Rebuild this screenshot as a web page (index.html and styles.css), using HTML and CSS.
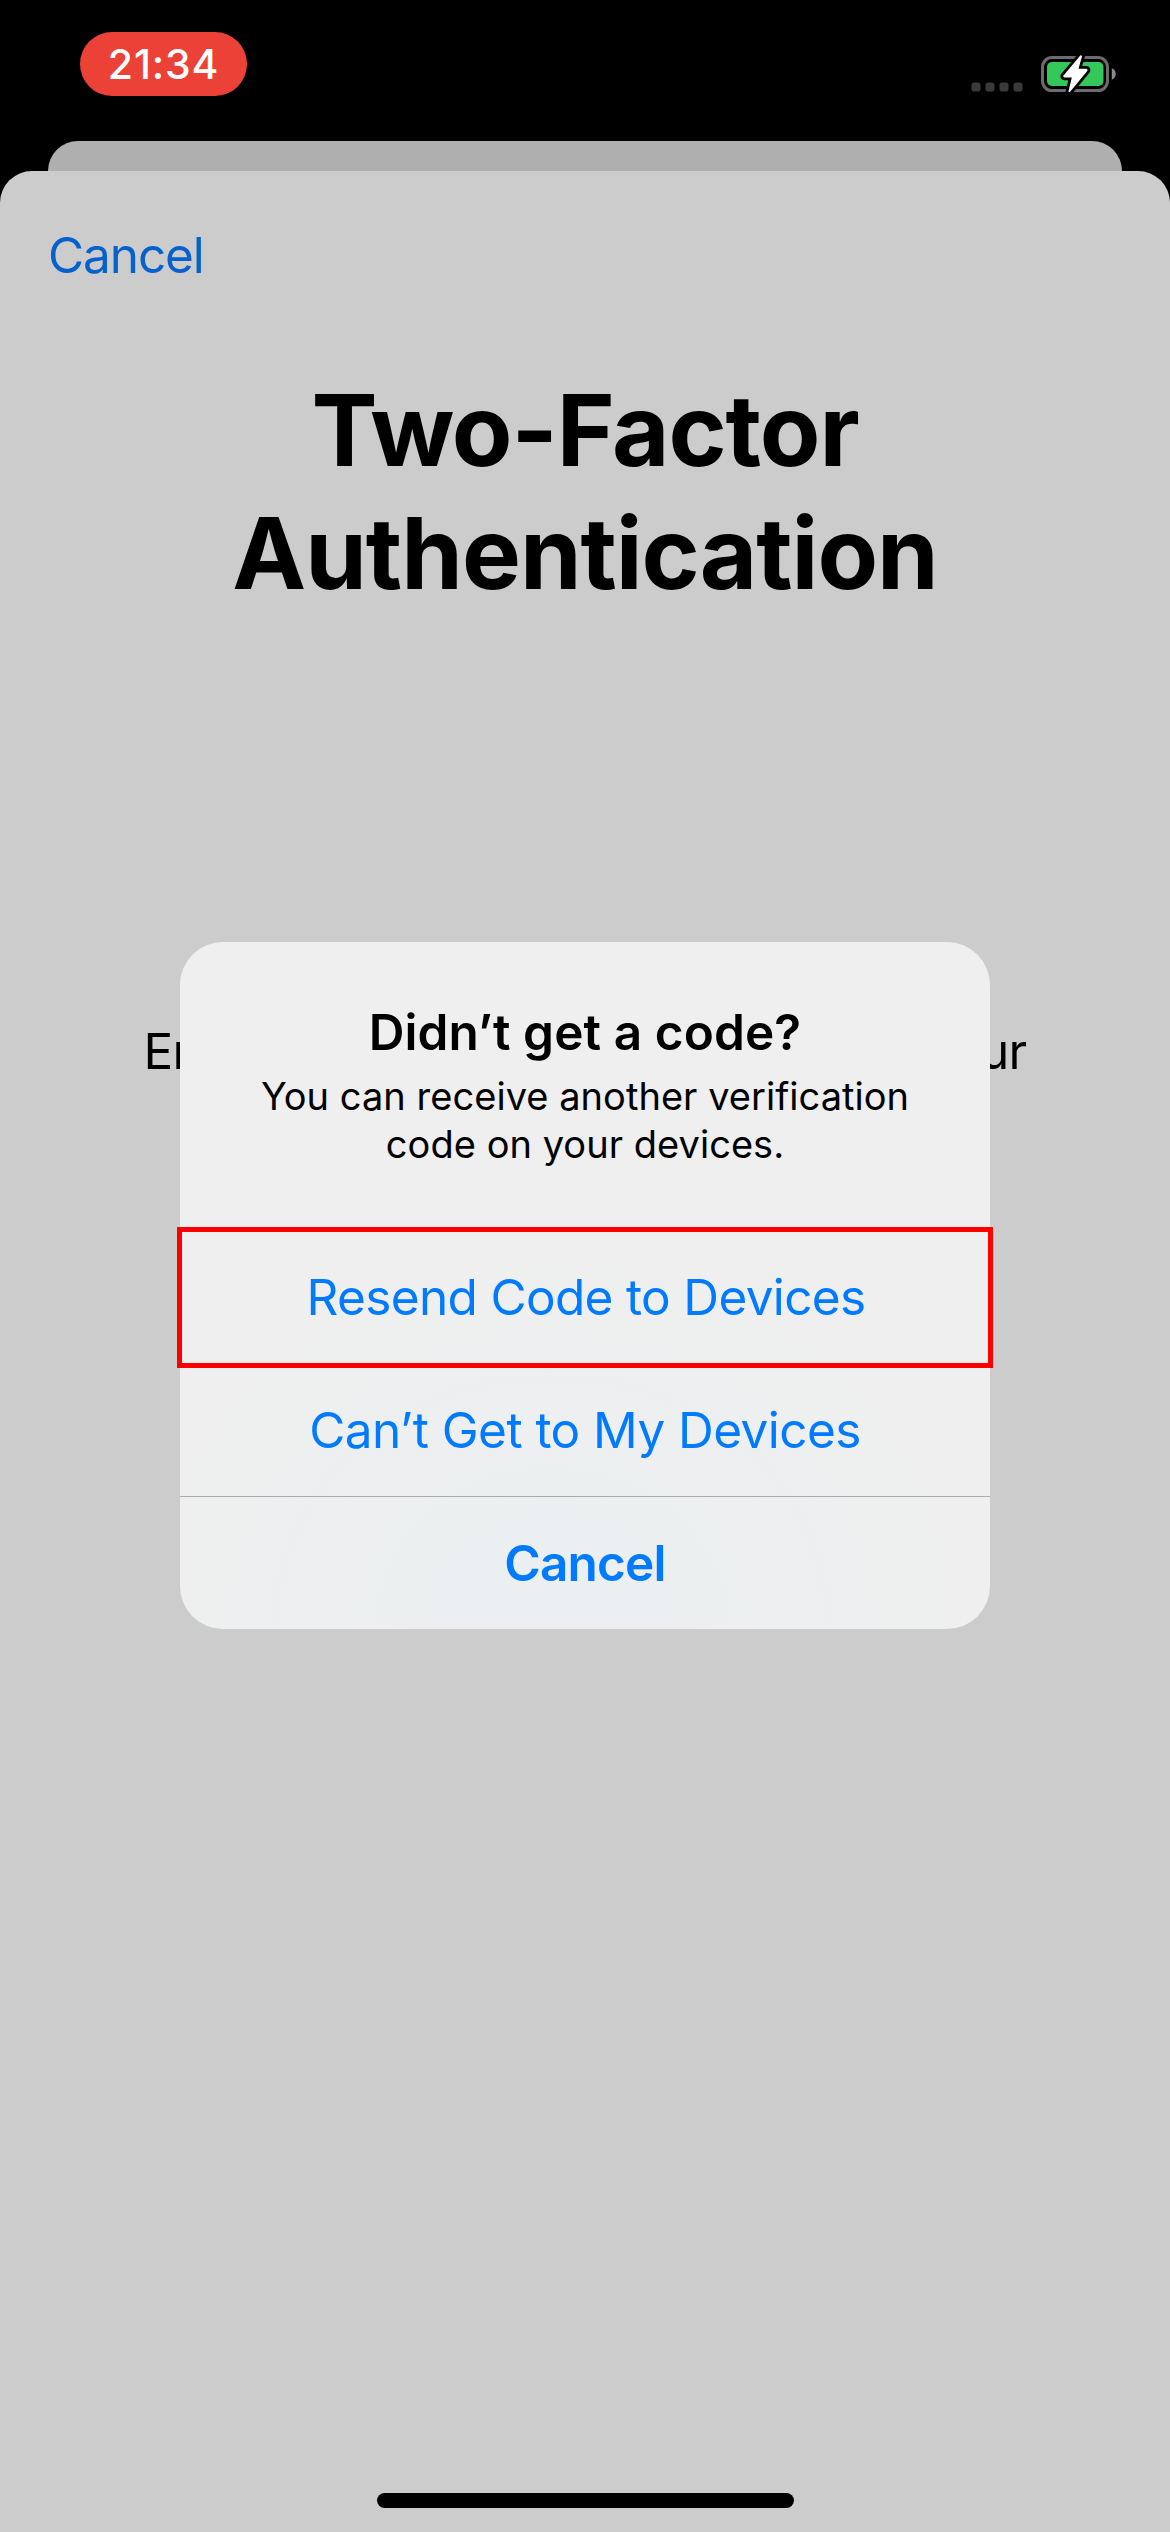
FILE: index.html
```html
<!DOCTYPE html>
<html lang="en">
<head>
<meta charset="utf-8">
<title>Two-Factor Authentication</title>
<link rel="stylesheet" href="styles.css">
</head>
<body>
<div class="screen">
  <header class="status-bar">
    <span class="clock">21:34</span>
    <div class="indicators">
      <svg class="signal" width="52" height="10" viewBox="0 0 52 10" aria-hidden="true">
        <g fill="#3a3a3c">
          <rect x="0.5" y="0.5" width="9" height="9" rx="2.8"/>
          <rect x="14.5" y="0.5" width="9" height="9" rx="2.8"/>
          <rect x="28.5" y="0.5" width="9" height="9" rx="2.8"/>
          <rect x="42.5" y="0.5" width="9" height="9" rx="2.8"/>
        </g>
      </svg>
      <svg class="battery" width="76" height="42" viewBox="0 0 76 42" aria-hidden="true">
        <rect x="2.500" y="4.600" width="65" height="33" rx="9.500" fill="none" stroke="#6c6c70" stroke-width="3"/>
        <rect x="7" y="9" width="56.500" height="24" rx="5" fill="#34c759"/>
        <path d="M71.800 15.300c2.600 1 4 3.300 4 5.700s-1.400 4.700-4 5.700z" fill="#8a8a8d"/>
        <path d="M40.300 2.500 23.500 22.500q-1 1.700 1 2h7.300L28.500 38.300q.5 1.500 1.600.5L47.300 18q.9-1.800-1-2.200h-7.800L42 3.500q-.6-1.700-1.700-1z" fill="#fff" stroke="#000" stroke-width="5.600" stroke-linejoin="round" paint-order="stroke"/>
      </svg>
    </div>
  </header>
  <div class="sheet-behind"></div>
  <main class="sheet">
    <nav class="nav"><a class="nav-cancel">Cancel</a></nav>
    <h1 class="title"><span class="title-first">Two-Factor</span><br>Authentication</h1>
    <p class="prompt"><span>Enter</span><span>your</span></p>
    <div class="home-indicator"></div>
  </main>
  <section class="alert" role="alertdialog">
    <div class="alert-head">
      <h2 class="alert-title">Didn’t get a code?</h2>
      <p class="alert-message">You can receive another verification<br>code on your devices.</p>
    </div>
    <div class="action action-resend">Resend Code to Devices<span class="highlight"></span></div>
    <div class="action action-other">Can’t Get to My Devices</div>
    <div class="action action-cancel">Cancel</div>
  </section>
</div>
</body>
</html>
```
FILE: styles.css
```css
* { box-sizing: border-box; margin: 0; padding: 0; }

body {
  background: #000;
  font-family: Inter, "Liberation Sans", sans-serif;
  color: #000;
}

.screen {
  position: relative;
  display: flex;
  flex-direction: column;
  width: 1170px;
  height: 2532px;
  overflow: hidden;
}

.status-bar {
  display: flex;
  justify-content: space-between;
  align-items: flex-start;
  height: 141px;
  padding: 32px 54px 0 80px;
}

.clock {
  width: 167px;
  height: 64px;
  border-radius: 32px;
  background: #eb4137;
  color: #fff;
  font-size: 41px;
  font-weight: 500;
  line-height: 64px;
  letter-spacing: 0.8px;
  text-align: center;
}

.indicators {
  display: flex;
  gap: 17px;
  padding-top: 21px;
}

.signal { margin-top: 28.5px; }

.sheet-behind {
  height: 30px;
  margin: 0 48px;
  border-radius: 30px 30px 0 0;
  background: #afafaf;
}

.sheet {
  flex: 1;
  display: flex;
  flex-direction: column;
  align-items: center;
  border-radius: 32px 32px 0 0;
  background: #ccc;
}

.nav {
  align-self: stretch;
  height: 168px;
  padding-left: 48px;
  line-height: 168px;
}

.nav-cancel {
  color: #0562cc;
  font-size: 49.5px;
  letter-spacing: -1.1px;
}

.title {
  margin-top: 30px;
  font-size: 99px;
  font-weight: 700;
  line-height: 123px;
  letter-spacing: -1px;
  text-align: center;
}

.title-first { letter-spacing: -1.1px; }

.prompt {
  display: flex;
  justify-content: space-between;
  width: 883px;
  margin-top: 406px;
  font-size: 49.5px;
  line-height: 60px;
  letter-spacing: -0.65px;
}

.home-indicator {
  width: 417px;
  height: 15px;
  margin: auto 0 24px;
  border-radius: 8px;
  background: #000;
}

.alert {
  position: absolute;
  left: 180px;
  top: 942px;
  width: 810px;
  border-radius: 43px;
  background: radial-gradient(ellipse 420px 380px at 46% 100%, #ebeff1, #efefef);
  text-align: center;
}

.alert-head {
  height: 289px;
  padding-top: 60px;
}

.alert-title {
  font-size: 49.5px;
  font-weight: 600;
  line-height: 60px;
  letter-spacing: 0.1px;
}

.alert-message {
  margin-top: 10px;
  font-size: 38px;
  line-height: 48px;
  letter-spacing: 0.04px;
}

.action {
  position: relative;
  height: 133px;
  color: #007aff;
  font-size: 49.5px;
  line-height: 133px;
  letter-spacing: -0.66px;
}

.action-resend { padding-left: 2px; }

.action-other {
  height: 132px;
  letter-spacing: -0.56px;
}

.action-cancel {
  border-top: 1px solid #a9acab;
  font-weight: 600;
  letter-spacing: -0.8px;
}

/* frame drawn around the resend row */
.highlight {
  position: absolute;
  inset: -4px -3px -4px -3px;
  border: 5px solid #f00;
}
```
